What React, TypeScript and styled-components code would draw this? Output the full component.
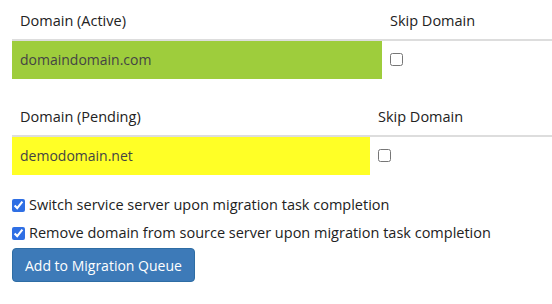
import React from "react";
import styled, { createGlobalStyle } from "styled-components";

const GlobalStyle = createGlobalStyle`
  body {
    margin: 0;
    background: #fff;
    font-family: "Open Sans", "Liberation Sans", sans-serif;
    font-size: 14px;
    line-height: 20px;
    color: #333;
    overflow: hidden;
  }
`;

type DomainTable = {
  label: string;
  domain: string;
  color: string;
  firstWidth: number;
};

const tables: DomainTable[] = [
  { label: "Domain (Active)", domain: "domaindomain.com", color: "#9ecd3c", firstWidth: 370 },
  { label: "Domain (Pending)", domain: "demodomain.net", color: "#ffff26", firstWidth: 358 }
];

const options = [
  "Switch service server upon migration task completion",
  "Remove domain from source server upon migration task completion"
];

export default function App() {
  return (
    <>
      <GlobalStyle />
      <Page>
        {tables.map(t => (
          <Table key={t.label}>
            <HeadRow>
              <HeadCell $width={t.firstWidth}>{t.label}</HeadCell>
              <HeadCell>Skip Domain</HeadCell>
            </HeadRow>
            <BodyRow>
              <DomainCell $width={t.firstWidth} $bg={t.color}>
                {t.domain}
              </DomainCell>
              <SkipCell>
                <Box type="checkbox" />
              </SkipCell>
            </BodyRow>
          </Table>
        ))}
        <Options>
          {options.map(o => (
            <OptionLabel key={o}>
              <CheckMark type="checkbox" defaultChecked />
              {o}
            </OptionLabel>
          ))}
        </Options>
        <PrimaryButton>Add to Migration Queue</PrimaryButton>
      </Page>
    </>
  );
}

const Page = styled.div`
  padding: 3px 0 0 12px;
`;

const Table = styled.div`
  display: flex;
  flex-direction: column;
  margin-bottom: 20px;
`;

const HeadRow = styled.div`
  display: flex;
  border-bottom: 2px solid #ddd;
`;

const HeadCell = styled.div<{ $width?: number }>`
  ${p => (p.$width ? `width: ${p.$width}px;` : "flex: 1;")}
  box-sizing: border-box;
  padding: 8px;
  font-size: 14.5px;
  color: #222;
  white-space: nowrap;
`;

const BodyRow = styled.div`
  display: flex;
  height: 38px;
`;

const DomainCell = styled.div<{ $width: number; $bg: string }>`
  width: ${p => p.$width}px;
  box-sizing: border-box;
  padding: 9px 8px;
  background: ${p => p.$bg};
  color: #444;
`;

const SkipCell = styled.div`
  flex: 1;
  padding: 12px 8px 0;
`;

const Box = styled.input`
  margin: 0;
  width: 13px;
  height: 13px;
  display: block;
`;

const Options = styled.div`
  display: flex;
  flex-direction: column;
  gap: 8px;
  margin-top: 1px;
`;

const OptionLabel = styled.label`
  display: flex;
  align-items: center;
  gap: 4px;
  height: 20px;
  font-size: 14.5px;
  color: #222;
  white-space: nowrap;
`;

const CheckMark = styled.input`
  margin: 0;
  width: 13px;
  height: 13px;
  accent-color: #2f6fe4;
`;

const PrimaryButton = styled.button`
  margin-top: 5px;
  height: 34px;
  padding: 0 12px;
  font-family: "Open Sans", "Liberation Sans", sans-serif;
  font-size: 14px;
  color: #fff;
  background: #3d7ab8;
  border: 1px solid #2e6da4;
  border-radius: 4px;
  display: block;
`;
